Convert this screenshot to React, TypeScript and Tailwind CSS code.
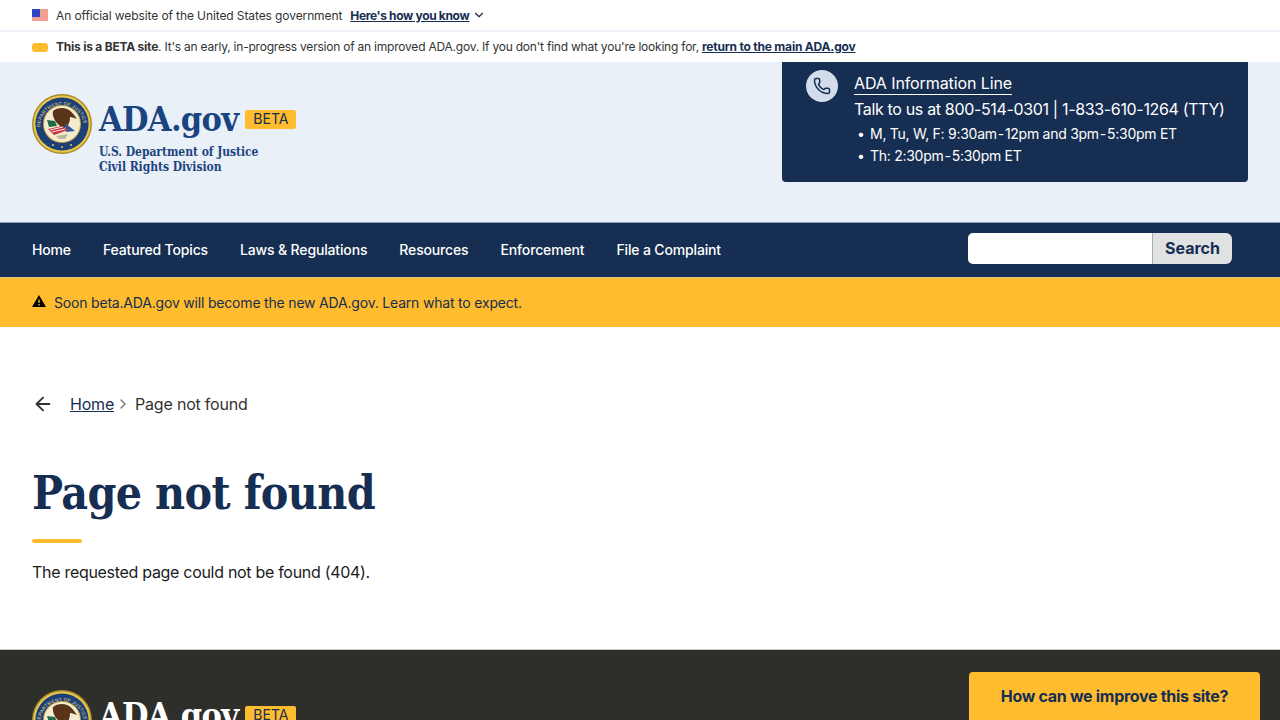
import { ArrowLeft, ChevronDown, ChevronRight, Phone } from 'lucide-react';

const sans = 'font-["Inter","Liberation_Sans",sans-serif]';
const serif = 'font-["DejaVu_Serif","Liberation_Serif",serif] [font-stretch:condensed]';
const navItems = ['Home', 'Featured Topics', 'Laws & Regulations', 'Resources', 'Enforcement', 'File a Complaint'];

function Seal() {
  return (
    <svg viewBox="0 0 60 60" className="w-[60px] h-[60px] shrink-0">
      <circle cx="30" cy="30" r="30" fill="#a98a2c" />
      <circle cx="30" cy="30" r="28.6" fill="#e8c84a" />
      <circle cx="30" cy="30" r="26.6" fill="#1c3f78" />
      <circle cx="30" cy="30" r="19" fill="#c9a83c" />
      <circle cx="30" cy="30" r="18" fill="#f5ecd0" />
      <path id="sealRing" d="M8 33a22 22 0 1 1 44 0" fill="none" />
      <text fontSize="4.6" fill="#e8d98c" fontFamily="Liberation Sans, sans-serif" letterSpacing=".3">
        <textPath href="#sealRing">DEPARTMENT OF JUSTICE</textPath>
      </text>
      <path d="M21 17c3-3 10-4 14-2 3 1 7 5 10 10-3-1-5-2-7-2 0 4-1 8-4 10l-3 2-4-4c-4-3-7-9-6-14z" fill="#5a3418" />
      <path d="M15 26l8 1 2 5-8 1z" fill="#1f6b47" />
      <path d="M33 29l10 8-9 1z" fill="#2d5a9e" />
      <path d="M16 35l14-3 6 4-14 5z" fill="#c8303a" />
      <path d="M18 36l13-3M20 38l13-3" stroke="#fff" strokeWidth=".9" />
      <path d="M24 42l12-2-3 5h-6z" fill="#bdb8a0" />
      <circle cx="21" cy="51" r="1" fill="#e8c84a" />
      <circle cx="30" cy="53" r="1" fill="#e8c84a" />
      <circle cx="39" cy="51" r="1" fill="#e8c84a" />
    </svg>
  );
}

function Logo({ dark }: { dark?: boolean }) {
  return (
    <div className="flex items-start gap-[7px]">
      <Seal />
      <div className="flex flex-col">
        <div className="flex items-start">
          <span className={`${serif} font-bold text-[34px] leading-[50px] tracking-[-0.7px] h-[50px] ${dark ? 'text-white' : 'text-[#1a4480]'}`}>
            ADA.gov
          </span>
          <span className={`${sans} ml-[7px] mt-[16px] bg-[#ffbc2e] text-[#162e51] text-sm leading-[18px] h-[19px] px-2 rounded-[2px]`}>
            BETA
          </span>
        </div>
        <div className={`${serif} font-bold text-[12px] leading-[15px] text-[#1a4480] mt-px tracking-[-0.04px]`}>
          <div>U.S. Department of Justice</div>
          <div>Civil Rights Division</div>
        </div>
      </div>
    </div>
  );
}

export default function App() {
  return (
    <div className={`${sans} h-[720px] overflow-hidden bg-white text-[#1b1b1b]`}>
      <div className="h-[32px] border-b-2 border-[#f0f4fa] px-8 flex items-center text-xs tracking-[-0.2px]">
        <span className="relative w-4 h-3 bg-[#f0a090] mr-2 -mt-px">
          <span className="absolute left-0 top-0 w-2 h-2 bg-[#2f45c8]" />
        </span>
        <span className="text-[#333] tracking-[-0.1px] mt-px">An official website of the United States government</span>
        <a className="ml-2 font-bold text-[#162e51] underline mt-px tracking-[-0.33px]">Here's how you know</a>
        <ChevronDown className="w-3.5 h-3.5 ml-[3px] text-[#162e51]" />
      </div>

      <div className="h-[30px] px-8 flex items-center text-xs tracking-[-0.22px]">
        <span className="w-4 h-[9px] rounded-[3px] bg-[#ffbc2e] mr-2" />
        <span className="text-[#333]">
          <b>This is a BETA site</b>. It's an early, in-progress version of an improved ADA.gov. If you don't find what you're looking for,{' '}
        </span>
        <a className="ml-[3px] font-bold text-[#162e51] underline tracking-[-0.2px]">return to the main ADA.gov</a>
      </div>

      <header className="h-[160px] bg-[#eaf0f7] pl-8 pr-8 flex justify-between items-start">
        <div className="pt-8">
          <Logo />
        </div>
        <div className="w-[466px] h-[120px] bg-[#162e51] rounded-b-[4px] flex text-white pl-6 pt-2">
          <div className="w-8 h-8 rounded-full bg-[#d3dcea] flex items-center justify-center shrink-0">
            <Phone className="w-[18px] h-[18px] text-[#162e51]" strokeWidth={2} />
          </div>
          <div className="ml-4">
            <a className="block w-fit text-base leading-[24px] mt-[1px] border-b border-white h-[24px] tracking-[-0.1px]">ADA Information Line</a>
            <div className="text-base leading-[24px] mt-[2px] tracking-[-0.34px]">Talk to us at 800-514-0301 | 1-833-610-1264 (TTY)</div>
            <ul className="text-sm leading-[22px] mt-[2px] tracking-[-0.27px]">
              <li className="flex"><span className="w-4 pl-[3px]">•</span>M, Tu, W, F: 9:30am{'\u200a'}-{'\u200a'}12pm and 3pm{'\u200a'}-{'\u200a'}5:30pm ET</li>
              <li className="flex"><span className="w-4 pl-[3px]">•</span>Th: 2:30pm{'\u200a'}-{'\u200a'}5:30pm ET</li>
            </ul>
          </div>
        </div>
      </header>

      <nav className="h-[55px] bg-[#162e51] border-t border-[#8fa0b8] pl-8 pr-12 flex items-center justify-between">
        <div className="flex gap-8 text-white text-sm font-medium tracking-[-0.15px]">
          {navItems.map(item => (
            <a key={item}>{item}</a>
          ))}
        </div>
        <div className="flex h-[31px] -mt-[4px]">
          <input className="w-[184px] bg-white rounded-l-[5px] outline-none" aria-label="Search" />
          <button className="w-[80px] bg-[#dfe1e2] border-l border-[#a9aeb1] rounded-r-[6px] text-[#162e51] font-bold text-base">
            Search
          </button>
        </div>
      </nav>

      <div className="h-[50px] bg-[#ffbc2e] border-t border-[#d9c48c] px-8 flex items-center text-sm text-[#162e51] tracking-[-0.19px]">
        <svg viewBox="0 0 14 12" className="w-[14px] h-[12px] -mt-[4px] mr-2">
          <path d="M7 0l7 12H0z" fill="#000" />
          <path d="M6.3 4.4h1.4v3.6H6.3zM6.3 9h1.4v1.4H6.3z" fill="#ffbc2e" />
        </svg>
        <span>Soon beta.ADA.gov will become the new ADA.gov. Learn what to expect.</span>
      </div>

      <main className="h-[323px] px-8 pt-[65px] border-b border-[#c8c8c8]">
        <div className="flex items-center h-6 text-base tracking-[-0.2px]">
          <ArrowLeft className="w-[22px] h-[22px] text-[#333]" strokeWidth={2} />
          <a className="ml-[16px] text-[#162e51] underline">Home</a>
          <ChevronRight className="w-4 h-4 ml-[1px] text-[#71767a]" />
          <span className="ml-[4px] text-[#333]">Page not found</span>
        </div>
        <h1 className={`${serif} font-bold text-[46px] leading-[64px] text-[#162e51] mt-[45px] tracking-[-0.65px]`}>Page not found</h1>
        <div className="w-[50px] h-1 rounded-full bg-[#ffbc2e] mt-[14px]" />
        <p className="mt-[17px] text-base leading-6 text-[#1b1b1b] tracking-[-0.3px]">The requested page could not be found (404).</p>
      </main>

      <footer className="h-[200px] bg-[#2e2e2a] pl-8 pr-5 pt-[22px] flex justify-between items-start relative">
        <div className="pt-[18px]">
          <Logo dark />
        </div>
        <a className="w-[291px] h-[80px] bg-[#ffbc2e] rounded-[4px] text-[#162e51] font-bold text-base text-center pt-[12px] leading-6 tracking-[-0.3px]">
          How can we improve this site?
        </a>
      </footer>
    </div>
  );
}
